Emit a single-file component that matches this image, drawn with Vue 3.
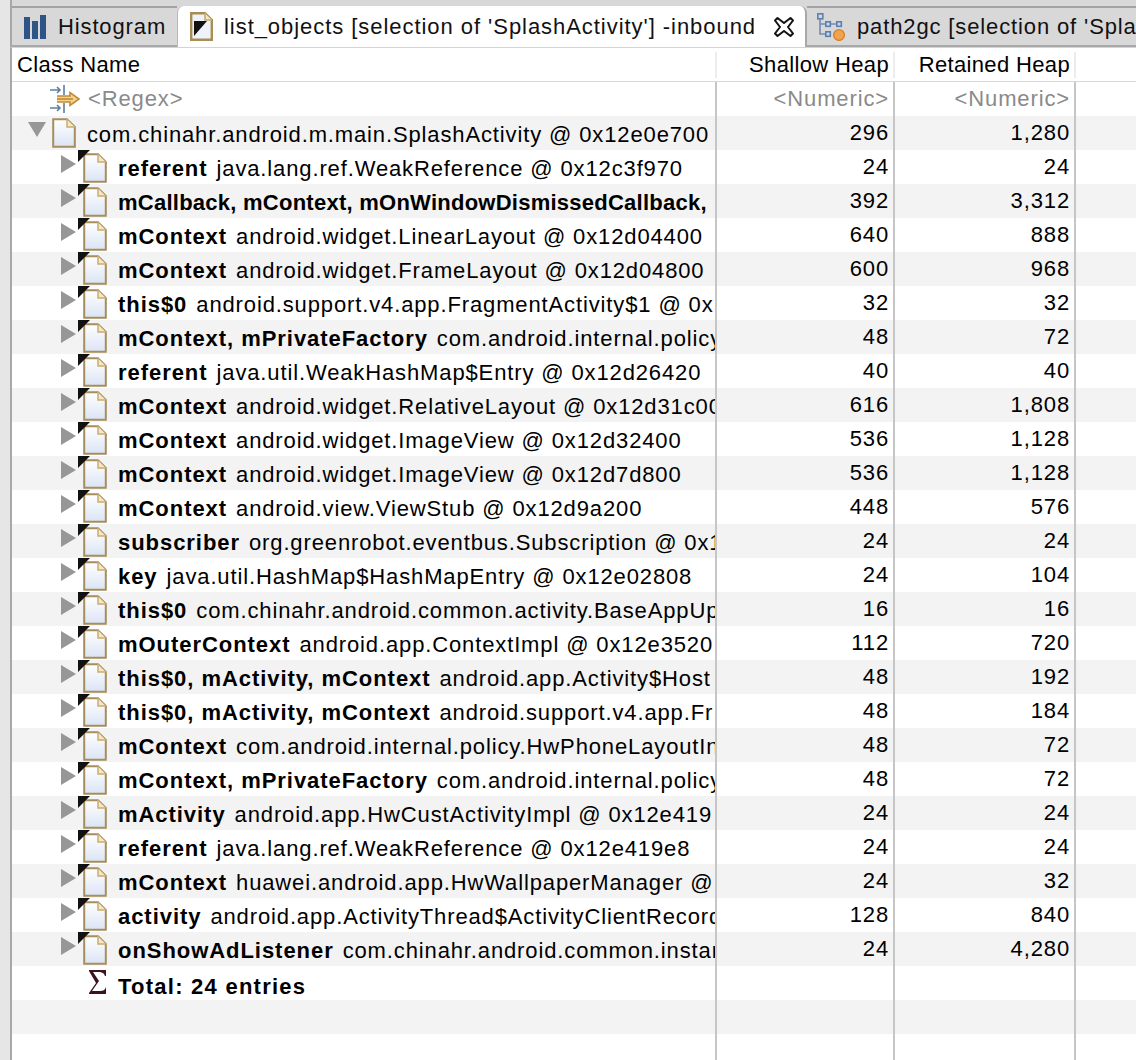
<script setup>
const rows = [
  { name: "referent", rest: "java.lang.ref.WeakReference @ 0x12c3f970", shallow: "24", retained: "24" },
  { name: "mCallback, mContext, mOnWindowDismissedCallback,", rest: "", shallow: "392", retained: "3,312", tight: true },
  { name: "mContext", rest: "android.widget.LinearLayout @ 0x12d04400", shallow: "640", retained: "888" },
  { name: "mContext", rest: "android.widget.FrameLayout @ 0x12d04800", shallow: "600", retained: "968" },
  { name: "this$0", rest: "android.support.v4.app.FragmentActivity$1 @ 0x", shallow: "32", retained: "32" },
  { name: "mContext, mPrivateFactory", rest: "com.android.internal.policy", shallow: "48", retained: "72" },
  { name: "referent", rest: "java.util.WeakHashMap$Entry @ 0x12d26420", shallow: "40", retained: "40" },
  { name: "mContext", rest: "android.widget.RelativeLayout @ 0x12d31c00", shallow: "616", retained: "1,808" },
  { name: "mContext", rest: "android.widget.ImageView @ 0x12d32400", shallow: "536", retained: "1,128" },
  { name: "mContext", rest: "android.widget.ImageView @ 0x12d7d800", shallow: "536", retained: "1,128" },
  { name: "mContext", rest: "android.view.ViewStub @ 0x12d9a200", shallow: "448", retained: "576" },
  { name: "subscriber", rest: "org.greenrobot.eventbus.Subscription @ 0x1", shallow: "24", retained: "24" },
  { name: "key", rest: "java.util.HashMap$HashMapEntry @ 0x12e02808", shallow: "24", retained: "104" },
  { name: "this$0", rest: "com.chinahr.android.common.activity.BaseAppUp", shallow: "16", retained: "16" },
  { name: "mOuterContext", rest: "android.app.ContextImpl @ 0x12e3520", shallow: "112", retained: "720" },
  { name: "this$0, mActivity, mContext", rest: "android.app.Activity$Host", shallow: "48", retained: "192" },
  { name: "this$0, mActivity, mContext", rest: "android.support.v4.app.Fr", shallow: "48", retained: "184" },
  { name: "mContext", rest: "com.android.internal.policy.HwPhoneLayoutIn", shallow: "48", retained: "72" },
  { name: "mContext, mPrivateFactory", rest: "com.android.internal.policy", shallow: "48", retained: "72" },
  { name: "mActivity", rest: "android.app.HwCustActivityImpl @ 0x12e419", shallow: "24", retained: "24" },
  { name: "referent", rest: "java.lang.ref.WeakReference @ 0x12e419e8", shallow: "24", retained: "24" },
  { name: "mContext", rest: "huawei.android.app.HwWallpaperManager @ 0", shallow: "24", retained: "32" },
  { name: "activity", rest: "android.app.ActivityThread$ActivityClientRecord", shallow: "128", retained: "840" },
  { name: "onShowAdListener", rest: "com.chinahr.android.common.instan", shallow: "24", retained: "4,280" },
];
</script>

<template>
  <div class="page">
    <div class="tabbar">
      <div class="tab">
        <svg class="tab-icon" width="22" height="24" viewBox="0 0 22 24">
          <rect x="0" y="2" width="6" height="22" fill="#2f5587" />
          <rect x="8" y="6" width="6" height="18" fill="#2f5587" />
          <rect x="16" y="0" width="6" height="24" fill="#2f5587" />
        </svg>
        <span>Histogram</span>
      </div>
      <div class="tab active">
        <svg class="tab-icon" width="23" height="29" viewBox="0 0 23 29">
          <path d="M1.2 1.2H15L21.8 8V27.8H1.2Z" fill="#eef2fa" stroke="#a88d55" stroke-width="2.4" />
          <path d="M15 1.2V8H21.8" fill="#f4e8c8" stroke="#c8ab6a" stroke-width="1.6" />
          <path d="M4 9H17L4 24Z" fill="#111" />
        </svg>
        <span>list_objects [selection of 'SplashActivity'] -inbound</span>
        <svg class="close" width="22" height="22" viewBox="0 0 22 22">
          <path d="M2 4.5L4.5 2L11 7L17.5 2L20 4.5L15 11L20 17.5L17.5 20L11 15L4.5 20L2 17.5L7 11Z" fill="#fff" stroke="#111" stroke-width="2" stroke-linejoin="round" />
        </svg>
      </div>
      <div class="tab last">
        <svg class="tab-icon" width="29" height="28" viewBox="0 0 29 28">
          <path d="M3 3V21H10M3 11H20" fill="none" stroke="#6f8db5" stroke-width="1.6" />
          <rect x="0.8" y="0.8" width="5" height="5" fill="#c9d8ea" stroke="#5f80ad" stroke-width="1.6" />
          <rect x="8.8" y="8.8" width="4.5" height="4.5" fill="#c9d8ea" stroke="#5f80ad" stroke-width="1.6" />
          <rect x="19.8" y="8.8" width="4.5" height="4.5" fill="#c9d8ea" stroke="#5f80ad" stroke-width="1.6" />
          <rect x="8.8" y="18.8" width="4.5" height="4.5" fill="#c9d8ea" stroke="#5f80ad" stroke-width="1.6" />
          <circle cx="22" cy="22" r="5.4" fill="#f0a24c" stroke="#d9822b" stroke-width="1.4" />
        </svg>
        <span class="clip">path2gc [selection of 'Spla</span>
      </div>
    </div>

    <div class="table">
      <div class="row head">
        <div class="c name"><span class="clip">Class Name</span></div>
        <div class="c num">Shallow Heap</div>
        <div class="c num">Retained Heap</div>
      </div>

      <div class="row filter">
        <div class="c name">
          <svg class="regex" width="36" height="30" viewBox="0 0 36 30">
            <path d="M1 6H11M8 3L11 6L8 9M15 1V11M1 24H11M8 21L11 24L8 27M15 19V29" fill="none" stroke="#5e7ea3" stroke-width="1.6" />
            <path d="M8 12H21V8.5L30 15L21 21.5V18H8" fill="#f3d48e" stroke="#c08a35" stroke-width="1.6" />
            <path d="M8 15H24" stroke="#c08a35" stroke-width="1.6" />
          </svg>
          <span class="hint">&lt;Regex&gt;</span>
        </div>
        <div class="c num hint">&lt;Numeric&gt;</div>
        <div class="c num hint">&lt;Numeric&gt;</div>
      </div>

      <div class="row alt">
        <div class="c name root">
          <span class="arrow down"></span>
          <svg class="doc" width="24" height="30" viewBox="0 0 24 30">
            <defs>
              <linearGradient id="paper" x1="0" y1="0" x2="0" y2="1">
                <stop offset="0" stop-color="#ffffff" />
                <stop offset="1" stop-color="#dbe4f5" />
              </linearGradient>
            </defs>
            <path d="M1.2 1.2H15L22.8 9V28.8H1.2Z" fill="url(#paper)" stroke="#a68e5c" stroke-width="2" />
            <path d="M15 1.2V9H22.8" fill="#f6e7c2" stroke="#c9ad72" stroke-width="1.5" />
          </svg>
          <span class="clip text">com.chinahr.android.m.main.SplashActivity @ 0x12e0e700</span>
        </div>
        <div class="c num">296</div>
        <div class="c num">1,280</div>
      </div>

      <div v-for="(r, i) in rows" :key="i" class="row" :class="{ alt: i % 2 === 1 }">
        <div class="c name child">
          <span class="arrow"></span>
          <span class="mark"></span>
          <svg class="doc" width="24" height="30" viewBox="0 0 24 30">
            <path d="M1.2 1.2H15L22.8 9V28.8H1.2Z" fill="url(#paper)" stroke="#a68e5c" stroke-width="2" />
            <path d="M15 1.2V9H22.8" fill="#f6e7c2" stroke="#c9ad72" stroke-width="1.5" />
          </svg>
          <span class="clip text"><b :class="{ tight: r.tight }">{{ r.name }}</b> {{ r.rest }}</span>
        </div>
        <div class="c num">{{ r.shallow }}</div>
        <div class="c num">{{ r.retained }}</div>
      </div>

      <div class="row">
        <div class="c name total">
          <svg class="sigma" width="19" height="26" viewBox="0 0 19 26">
            <path d="M1 1H18V7H17C16 4 14 3 11 3H5L11 12L4 22H12C15 22 17 21 18 18V25H1V24L8 14L1 2Z" fill="#3c1420" />
          </svg>
          <b class="text">Total: 24 entries</b>
        </div>
        <div class="c num"></div>
        <div class="c num"></div>
      </div>

      <div class="row alt">
        <div class="c name"></div>
        <div class="c num"></div>
        <div class="c num"></div>
      </div>
      <div class="row short">
        <div class="c name"></div>
        <div class="c num"></div>
        <div class="c num"></div>
      </div>
    </div>
  </div>
</template>

<style scoped>
.page {
  width: 1136px;
  height: 1060px;
  overflow: hidden;
  box-sizing: border-box;
  padding-left: 10px;
  background: #e6e6e6;
  font-family: "Liberation Sans", Arial, sans-serif;
  font-size: 22px;
  letter-spacing: 0.87px;
  color: #000;
}

.tabbar {
  height: 48px;
  box-sizing: border-box;
  padding-top: 6px;
  display: flex;
  background: #d8d8d8;
  border-left: 2px solid #a8a8a8;
  border-bottom: 1px solid #d4d4d4;
}

.tab {
  display: flex;
  align-items: center;
  height: 41px;
  border-top: 2px solid #a3a3a3;
  border-bottom: 2px solid #a8a8a8;
  box-sizing: border-box;
  white-space: nowrap;
  background: #d8d8d8;
  color: #111;
}

.tab:first-child {
  width: 165px;
  padding-left: 12px;
  flex: none;
}

.tab.active {
  width: 630px;
  flex: none;
  background: #fff;
  padding-left: 12px;
  letter-spacing: 0.95px;
  border-top: none;
  border-bottom: none;
  border-left: 1px solid #b8b8b8;
  border-right: 2px solid #a8a8a8;
  border-radius: 7px 7px 0 0;
}

.tab.last {
  padding-left: 10px;
  flex: 1;
  min-width: 0;
}

.tab-icon {
  flex: none;
  margin-right: 12px;
}

.tab.active .tab-icon {
  margin-right: 11px;
}

.tab.last .tab-icon {
  margin-right: 11px;
}

.close {
  margin-left: 17px;
  flex: none;
}

.table {
  height: 1012px;
  background: #fff;
  border-left: 2px solid #a8a8a8;
}

.row {
  display: grid;
  grid-template-columns: 705px 178px 181px;
  height: 34px;
  align-items: stretch;
}

.row.short {
  height: 26px;
}

.row.alt {
  background: #f3f3f3;
}

.row.head {
  height: 34px;
  border-bottom: 1px solid #d8d8d8;
  box-sizing: border-box;
  align-items: center;
  letter-spacing: 0.35px;
}

.row.head .c {
  height: 26px;
  border-right-color: #ececec;
}

.c {
  display: flex;
  align-items: center;
  border-right: 2px solid #c6c6c6;
  box-sizing: border-box;
  min-width: 0;
  overflow: hidden;
  white-space: nowrap;
}

.name {
  padding-left: 5px;
}

.num {
  justify-content: flex-end;
  padding-right: 4px;
}

.filter .name {
  padding-left: 37px;
}

.regex {
  flex: none;
  margin-right: 3px;
}

.hint {
  color: #8a8a8a;
}

.clip {
  overflow: hidden;
  min-width: 0;
}

.text {
  margin-left: 11px;
  padding-top: 3px;
}

.root {
  padding-left: 16px;
}

.child {
  padding-left: 49px;
  position: relative;
}

.total {
  padding-left: 76px;
}

.total .text {
  margin-left: 11px;
  padding-top: 7px;
  letter-spacing: 1.25px;
}

.sigma {
  flex: none;
  margin-top: -2px;
}

.arrow {
  flex: none;
  width: 0;
  height: 0;
  border-style: solid;
  border-width: 9px 0 9px 15px;
  border-color: transparent transparent transparent #979797;
  margin-top: -6px;
  margin-right: 7px;
}

.arrow.down {
  border-width: 15px 9px 0;
  border-color: #979797 transparent transparent;
  margin-top: -8px;
  margin-right: 6px;
}

.doc {
  flex: none;
}

.child .doc {
  margin-top: 2px;
}

.mark {
  position: absolute;
  left: 66px;
  top: -1px;
  width: 13px;
  height: 13px;
  background: #111;
  clip-path: polygon(0 0, 100% 0, 0 100%);
}

b {
  font-weight: 700;
  letter-spacing: 0.95px;
  margin-right: 2px;
}

b.tight {
  letter-spacing: 0.25px;
  margin-right: 0;
}
</style>
